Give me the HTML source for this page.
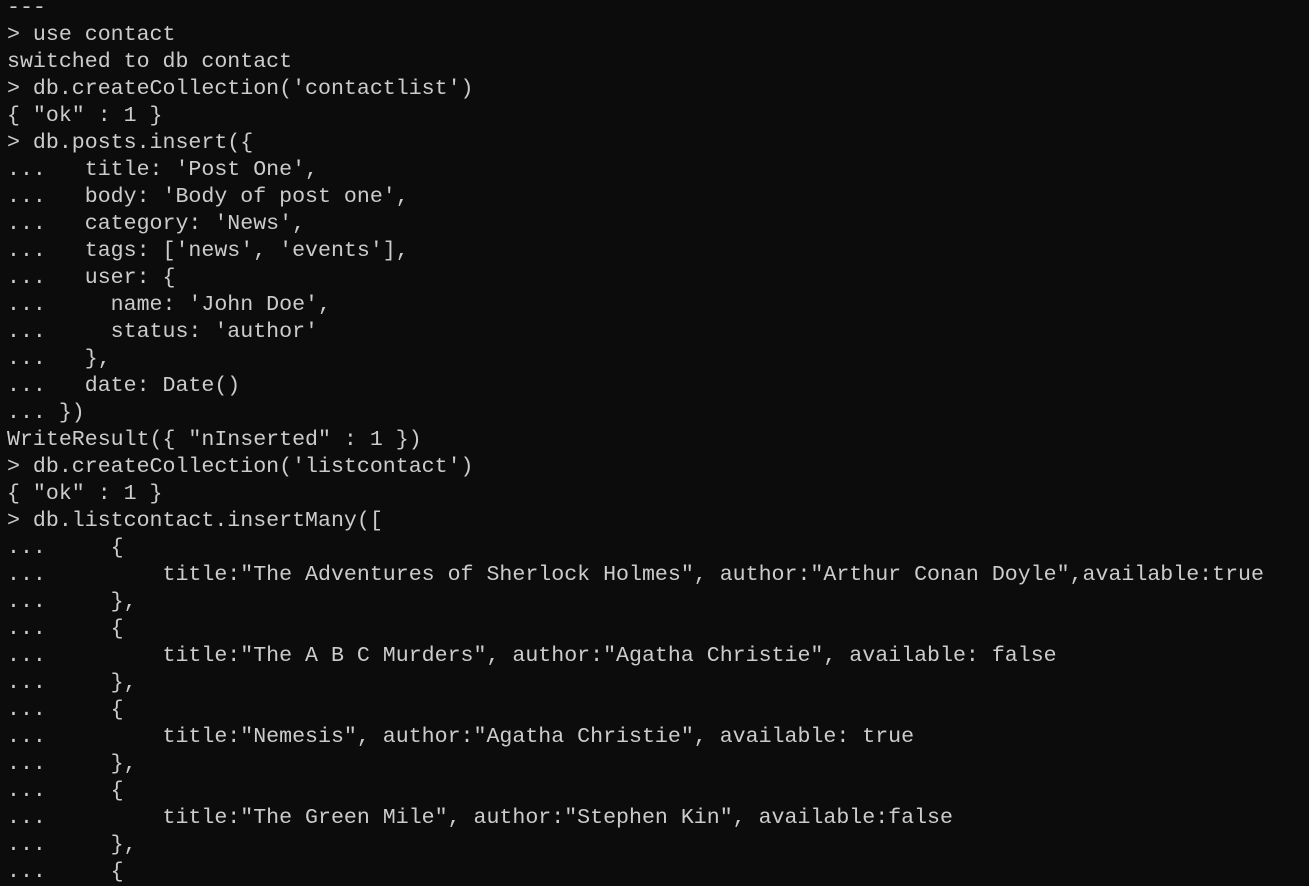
<!DOCTYPE html>
<html><head><meta charset="utf-8"><style>
html,body{margin:0;padding:0;background:#0c0c0c;width:1309px;height:884px;overflow:hidden}
pre{position:absolute;left:7px;top:-5px;margin:0;font-family:"Liberation Mono",monospace;font-size:21.6px;line-height:27px;color:#cccccc;white-space:pre}
</style></head><body><pre>---
&gt; use contact
switched to db contact
&gt; db.createCollection('contactlist')
{ "ok" : 1 }
&gt; db.posts.insert({
...   title: 'Post One',
...   body: 'Body of post one',
...   category: 'News',
...   tags: ['news', 'events'],
...   user: {
...     name: 'John Doe',
...     status: 'author'
...   },
...   date: Date()
... })
WriteResult({ "nInserted" : 1 })
&gt; db.createCollection('listcontact')
{ "ok" : 1 }
&gt; db.listcontact.insertMany([
...     {
...         title:"The Adventures of Sherlock Holmes", author:"Arthur Conan Doyle",available:true
...     },
...     {
...         title:"The A B C Murders", author:"Agatha Christie", available: false
...     },
...     {
...         title:"Nemesis", author:"Agatha Christie", available: true
...     },
...     {
...         title:"The Green Mile", author:"Stephen Kin", available:false
...     },
...     {
</pre></body></html>
